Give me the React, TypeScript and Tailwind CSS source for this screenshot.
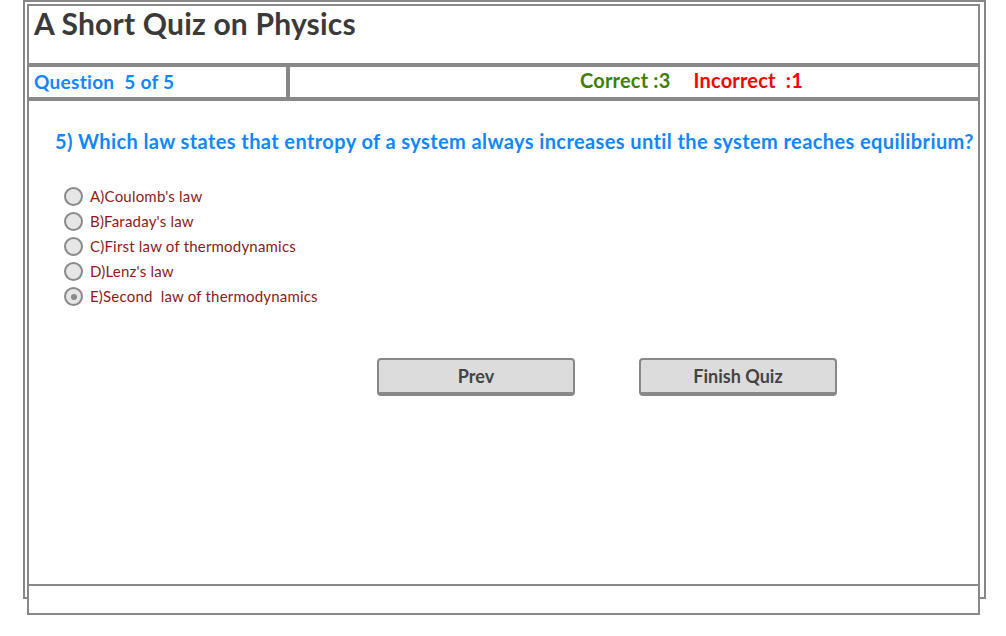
import React, { useState } from 'react';

const options = [
  "A)Coulomb's law",
  "B)Faraday's law",
  'C)First law of thermodynamics',
  "D)Lenz's law",
  'E)Second  law of thermodynamics',
];

const App: React.FC = () => {
  const [selected, setSelected] = useState(4);

  return (
    <div className="w-[1006px] h-[636px] bg-white font-['Lato','Liberation_Sans',sans-serif]">
      <div className="ml-[23px] w-[963px] h-[599px] border-2 border-[#888] pl-[2px] pr-[4px] pt-[2px]">
        {/* 제목 */}
        <div className="h-[61px] border-2 border-[#888] px-[5px]">
          <h1 className="text-[30px] leading-[34px] font-bold text-[#3a3a3a] tracking-[0.2px]">A Short Quiz on Physics</h1>
        </div>

        {/* 문항 / 점수 */}
        <div className="flex h-[34px]">
          <div className="w-[261px] border-2 border-[#888] flex items-center px-[5px]">
            <span className="text-[19px] font-bold text-[#0f87ff] whitespace-pre tracking-[0.3px]">Question  5 of 5</span>
          </div>
          <div className="flex-1 border-2 border-[#888] flex items-center pl-[290px] gap-[23px] pb-[4px]">
            <span className="text-[20px] font-bold text-[#3f8000] tracking-[0.2px]">Correct :3</span>
            <span className="text-[20px] font-bold text-[#ff0000] whitespace-pre tracking-[0.2px]">Incorrect  :1</span>
          </div>
        </div>

        {/* 문제 */}
        <div className="h-[487px] border-2 border-[#888] pl-[26px] pt-[27px]">
          <p className="text-[20px] leading-[26px] font-bold text-[#0f87ff] whitespace-nowrap tracking-[0.4px]">
            5) Which law states that entropy of a system always increases until the system reaches equilibrium?
          </p>

          <div className="mt-[30px] pl-[9px] flex flex-col">
            {options.map((opt, i) => (
              <label
                key={i}
                className="flex items-center h-[25px] cursor-pointer"
                onClick={() => setSelected(i)}
              >
                <span className="w-[19px] h-[19px] rounded-full border-2 border-[#8a8a8a] bg-[#e6e6e6] flex items-center justify-center">
                  {selected === i && <span className="w-[6px] h-[6px] rounded-full bg-[#8a8a8a]" />}
                </span>
                <span className="ml-[7px] text-[15px] text-[#8b1a1a] whitespace-pre tracking-[0.2px]">{opt}</span>
              </label>
            ))}
          </div>

          <div className="mt-[49px] flex pl-[322px] gap-[64px]">
            <button className="w-[198px] h-[38px] rounded-[4px] border-2 border-b-4 border-[#888] bg-[#dcdcdc] text-[18px] font-bold text-[#444]">
              Prev
            </button>
            <button className="w-[198px] h-[38px] rounded-[4px] border-2 border-b-4 border-[#888] bg-[#dcdcdc] text-[18px] font-bold text-[#444]">
              Finish Quiz
            </button>
          </div>
        </div>

        {/* 하단 */}
        <div className="relative h-[29px] border-2 border-t-0 border-[#888] bg-white" />
      </div>
    </div>
  );
};

export default App;
